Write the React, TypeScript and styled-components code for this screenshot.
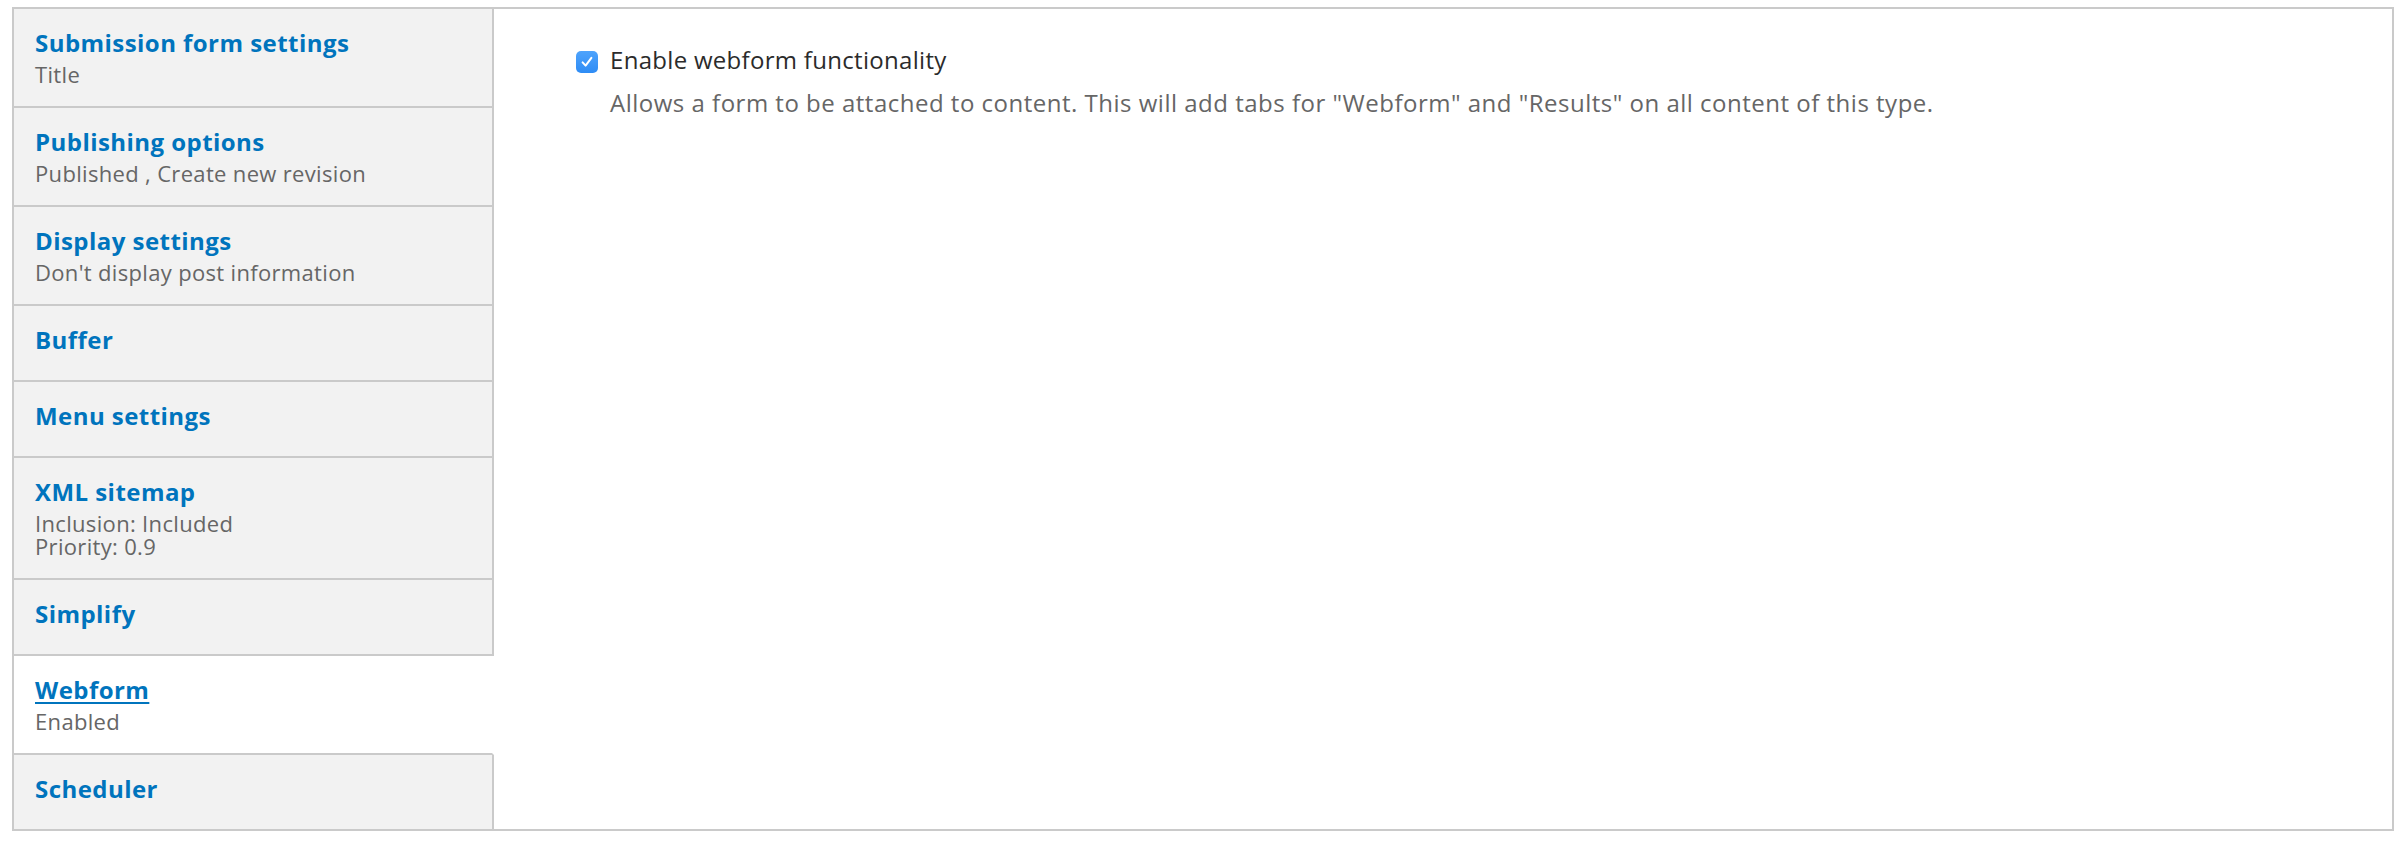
import React from "react";
import styled, { createGlobalStyle } from "styled-components";

const GlobalStyle = createGlobalStyle`
  html, body {
    margin: 0;
    padding: 0;
    background: #fff;
  }
  body {
    font-family: "Open Sans", "Noto Sans", "DejaVu Sans", sans-serif;
  }
`

const Page = styled.div`
  padding: 7px 14px 0 12px;
`

const Tabs = styled.div`
  display: flex;
  align-items: flex-start;
  border: 2px solid #cacaca;
`

const Menu = styled.ul`
  list-style: none;
  margin: 0;
  padding: 0;
  width: 480px;
  flex-shrink: 0;
`

const MenuItem = styled.li<{ $active?: boolean; $last?: boolean }>`
  background: ${p => (p.$active ? "#fff" : "#f2f2f2")};
  border-right: 2px solid ${p => (p.$active ? "#fff" : "#cacaca")};
  border-bottom: ${p => (p.$last ? "none" : "2px solid #cacaca")};
  padding: 13px 20px 20px 21px;
`

const ItemTitle = styled.a<{ $active?: boolean }>`
  display: block;
  font-size: 24px;
  line-height: 41px;
  font-weight: 700;
  letter-spacing: 0.45px;
  color: #0074bd;
  text-decoration: ${p => (p.$active ? "underline" : "none")};
  text-decoration-thickness: 2px;
  text-underline-offset: 3px;
  cursor: pointer;
`

const ItemSummary = styled.span`
  display: block;
  font-size: 22px;
  line-height: 23px;
  letter-spacing: 0.33px;
  color: #666;
`

const Pane = styled.div`
  flex: 1;
  padding: 36px 40px 0 82px;
`

const CheckRow = styled.label`
  display: flex;
  align-items: flex-start;
  gap: 12px;
  cursor: pointer;
`

const CheckBox = styled.span`
  width: 22px;
  height: 22px;
  margin-top: 6px;
  border-radius: 5px;
  background: linear-gradient(#4ea3fc, #2e8cf5);
  display: flex;
  align-items: center;
  justify-content: center;
  flex-shrink: 0;
`

const Label = styled.span`
  font-size: 24px;
  line-height: 30px;
  letter-spacing: 0.3px;
  color: #2b2b2b;
`

const Description = styled.div`
  margin: 13px 0 0 34px;
  font-size: 24px;
  line-height: 30px;
  letter-spacing: 0.5px;
  color: #666;
`

interface Tab {
    title: string;
    summary: string[];
}

const tabs: Tab[] = [
    {title: "Submission form settings", summary: ["Title"]},
    {title: "Publishing options", summary: ["Published , Create new revision"]},
    {title: "Display settings", summary: ["Don't display post information"]},
    {title: "Buffer", summary: []},
    {title: "Menu settings", summary: []},
    {title: "XML sitemap", summary: ["Inclusion: Included", "Priority: 0.9"]},
    {title: "Simplify", summary: []},
    {title: "Webform", summary: ["Enabled"]},
    {title: "Scheduler", summary: []},
];

const App: React.FC = () => {
    const activeTab = "Webform";

    return (
        <>
            <GlobalStyle/>
            <Page>
                <Tabs>
                    <Menu>
                        {tabs.map((tab, i) => (
                            <MenuItem key={tab.title} $active={tab.title === activeTab} $last={i === tabs.length - 1}>
                                <ItemTitle $active={tab.title === activeTab}>{tab.title}</ItemTitle>
                                {tab.summary.map(line => (
                                    <ItemSummary key={line}>{line}</ItemSummary>
                                ))}
                            </MenuItem>
                        ))}
                    </Menu>
                    <Pane>
                        <CheckRow>
                            <CheckBox>
                                <svg width="14" height="14" viewBox="0 0 14 14">
                                    <path d="M2.6 7.4 L5.6 10.6 L11.4 2.8" fill="none" stroke="#fff" strokeWidth="2"
                                          strokeLinecap="round" strokeLinejoin="round"/>
                                </svg>
                            </CheckBox>
                            <Label>Enable webform functionality</Label>
                        </CheckRow>
                        <Description>
                            Allows a form to be attached to content. This will add tabs for "Webform" and "Results" on all content of this type.
                        </Description>
                    </Pane>
                </Tabs>
            </Page>
        </>
    );
}

export default App;
